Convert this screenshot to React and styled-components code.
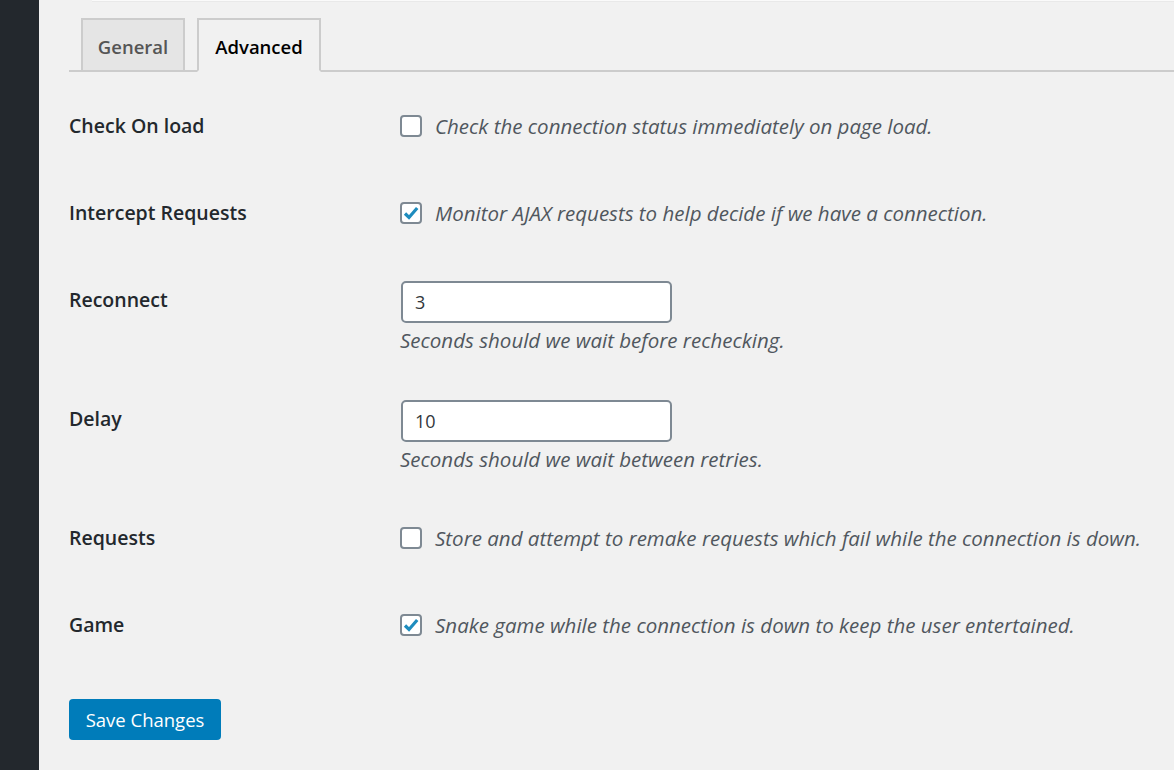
import React from "react"
import styled, { createGlobalStyle } from "styled-components"

const Global = createGlobalStyle`
  html, body {
    margin: 0;
    padding: 0;
    background: #f1f1f1;
    font-family: "Open Sans", "Noto Sans", sans-serif;
    color: #23282d;
  }
`

const Page = styled.div`
  display: flex;
  min-height: 770px;
`

const Sidebar = styled.div`
  width: 39px;
  flex-shrink: 0;
  background: #23282d;
`

const Main = styled.div`
  flex: 1;
  display: flex;
  flex-direction: column;
`

const TopEdge = styled.div`
  height: 2px;
  margin-left: 53px;
  background: #fafafa;
  border-bottom: 1px solid #e9e9e9;
  box-sizing: border-box;
`

const Content = styled.div`
  padding: 16px 0 0 30px;
`

const TabBar = styled.nav`
  display: flex;
  align-items: flex-end;
  border-bottom: 2px solid #cccccc;
  height: 52px;
`

const Tab = styled.a`
  display: flex;
  align-items: center;
  justify-content: center;
  box-sizing: border-box;
  height: 54px;
  margin-left: 12px;
  margin-bottom: -2px;
  width: ${(p) => p.$width}px;
  border: 2px solid #cccccc;
  border-bottom: 2px solid ${(p) => (p.$active ? "#f1f1f1" : "#cccccc")};
  background: ${(p) => (p.$active ? "#f1f1f1" : "#e5e5e5")};
  color: ${(p) => (p.$active ? "#000000" : "#555555")};
  font-size: 18.5px;
  font-weight: 600;
  padding-top: 2px;
  text-decoration: none;
`

const Form = styled.div`
  padding-top: 11px;
`

const Row = styled.div`
  display: grid;
  grid-template-columns: 331px 1fr;
  padding: ${(p) => (p.$input ? "24px 0 25px" : "30px 0 31px")};
`

const Label = styled.div`
  font-size: 19.5px;
  font-weight: 600;
  line-height: 26px;
  margin-top: ${(p) => (p.$input ? 6 : 0)}px;
  color: #23282d;
`

const CheckLine = styled.label`
  display: flex;
  align-items: center;
  gap: 13px;
  height: 26px;
`

const Box = styled.span`
  width: 22px;
  height: 22px;
  box-sizing: border-box;
  border: 2px solid #7e8993;
  border-radius: 4px;
  background: #ffffff;
  display: flex;
  align-items: center;
  justify-content: center;
  flex-shrink: 0;
`

const Desc = styled.span`
  font-size: 20.5px;
  font-style: italic;
  color: #50575e;
  line-height: ${(p) => (p.$under ? 22 : 26)}px;
  margin-top: ${(p) => (p.$under ? 6 : 0)}px;
  display: block;
  white-space: nowrap;
`

const TextInput = styled.input`
  box-sizing: border-box;
  width: 271px;
  height: 42px;
  margin-left: 1px;
  border: 2px solid #7e8993;
  border-radius: 5px;
  background: #ffffff;
  padding: 0 12px;
  font-family: "Open Sans", "Noto Sans", sans-serif;
  font-size: 18px;
  color: #32373c;
  outline: none;
`

const Field = styled.div`
  display: flex;
  flex-direction: column;
  align-items: flex-start;
`

const SaveButton = styled.button`
  margin-top: 30px;
  width: 152px;
  height: 41px;
  border: none;
  border-radius: 4px;
  background: #007cba;
  color: #ffffff;
  font-family: "Open Sans", "Noto Sans", sans-serif;
  font-size: 18.5px;
  cursor: pointer;
`

const Check = () => (
  <svg width="18" height="18" viewBox="0 0 18 18">
    <path
      d="M3 9.5 L7 13.5 L15.2 4"
      fill="none"
      stroke="#1e8cbe"
      strokeWidth="3.2"
      strokeLinecap="butt"
      strokeLinejoin="miter"
    />
  </svg>
)

const CheckRow = ({ label, checked, text }) => (
  <Row>
    <Label>{label}</Label>
    <CheckLine>
      <Box>{checked && <Check />}</Box>
      <Desc>{text}</Desc>
    </CheckLine>
  </Row>
)

const InputRow = ({ label, value, text }) => (
  <Row $input>
    <Label $input>{label}</Label>
    <Field>
      <TextInput defaultValue={value} />
      <Desc $under>{text}</Desc>
    </Field>
  </Row>
)

export default function App() {
  return (
    <Page>
      <Global />
      <Sidebar />
      <Main>
        <TopEdge />
        <Content>
          <TabBar>
            <Tab $width={104}>General</Tab>
            <Tab $width={124} $active>
              Advanced
            </Tab>
          </TabBar>
          <Form>
            <CheckRow
              label="Check On load"
              text="Check the connection status immediately on page load."
            />
            <CheckRow
              label="Intercept Requests"
              checked
              text="Monitor AJAX requests to help decide if we have a connection."
            />
            <InputRow
              label="Reconnect"
              value="3"
              text="Seconds should we wait before rechecking."
            />
            <InputRow
              label="Delay"
              value="10"
              text="Seconds should we wait between retries."
            />
            <CheckRow
              label="Requests"
              text="Store and attempt to remake requests which fail while the connection is down."
            />
            <CheckRow
              label="Game"
              checked
              text="Snake game while the connection is down to keep the user entertained."
            />
            <SaveButton>Save Changes</SaveButton>
          </Form>
        </Content>
      </Main>
    </Page>
  )
}
